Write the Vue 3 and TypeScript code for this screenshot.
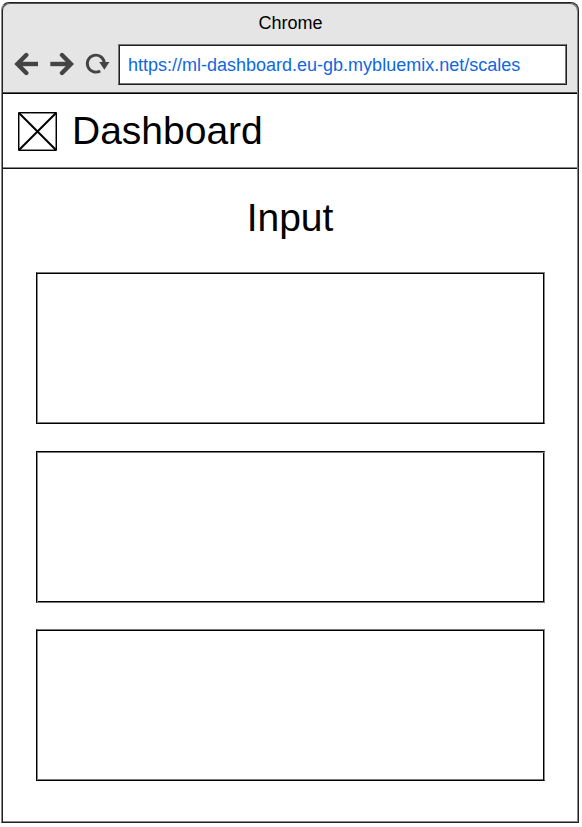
<script setup lang="ts">
const title = 'Chrome'
const url = 'https://ml-dashboard.eu-gb.mybluemix.net/scales'
const panels: string[] = ['first', 'second', 'third']
</script>

<template>
  <div class="window">
    <header class="chrome">
      <div class="title">{{ title }}</div>
      <div class="toolbar">
        <svg class="nav" width="96" height="24" viewBox="0 0 96 24" fill="none">
          <g stroke="#444" stroke-width="4.4">
            <path d="M3.5 12H24" />
            <path d="M12.3 3L3.4 12l8.9 9" stroke-linecap="round" />
            <path d="M36.3 12H57" />
            <path d="M48 3l8.9 9-8.9 9" stroke-linecap="round" />
          </g>
          <path d="M86.2 18.9A8.5 8.5 0 1 1 90.3 11" stroke="#444" stroke-width="2.9" />
          <path d="M85.2 10h10.2l-5 7.8z" fill="#444" />
        </svg>
        <div class="address">{{ url }}</div>
      </div>
    </header>
    <div class="bar">
      <svg class="logo" width="39" height="39" viewBox="0 0 39 39" fill="none">
        <path d="M1.5 1.5h36v36h-36z" stroke="#888" />
        <path d="M.5.5h38v38H.5z" stroke="#000" />
        <path d="M1 1l37 37M38 1L1 38" stroke="#000" stroke-width="2" />
      </svg>
      <h1>Dashboard</h1>
    </div>
    <main>
      <h2>Input</h2>
      <section v-for="name in panels" :key="name" class="panel" :class="name"></section>
    </main>
  </div>
</template>

<style>
body {
  background: #fff;
}
</style>

<style scoped>
.window {
  box-sizing: border-box;
  width: 578px;
  height: 821px;
  margin: 2px 0 0 1px;
  border: 1px solid #222;
  border-left-color: #888;
  border-radius: 8px 8px 0 0;
  box-shadow: inset 1px 0 #222, inset -1px 0 #888, inset 0 -1px #888, inset 0 1px #555;
  color: #000;
  font-family: 'Liberation Sans', Arial, sans-serif;
}
.chrome {
  box-sizing: border-box;
  height: 91px;
  margin: 0 1px;
  border-bottom: 1px solid #000;
  box-shadow: inset 0 -1px #555, inset 0 1px #555;
  border-radius: 7px 7px 0 0;
  background: #e5e5e5;
}
.title {
  height: 41px;
  padding-left: 1px;
  line-height: 40px;
  text-align: center;
  font-size: 18px;
}
.toolbar {
  display: flex;
}
.nav {
  flex: none;
  margin: 8px 8px 0 11px;
}
.address {
  box-sizing: border-box;
  width: 449px;
  height: 41px;
  padding-left: 9px;
  border: 1px solid #231f20;
  border-top-color: #777;
  border-left-color: #777;
  box-shadow: inset 1px 1px #231f20, inset -1px -1px #777;
  background: #fff;
  color: #1067e0;
  font-size: 18px;
  line-height: 41px;
  white-space: nowrap;
}
.bar {
  display: flex;
  box-sizing: border-box;
  height: 75px;
  margin: 0 1px;
  padding-left: 15px;
  border-bottom: 1px solid #111;
  box-shadow: inset 0 -1px #888;
}
.logo {
  flex: none;
  margin-top: 18px;
}
h1,
h2 {
  margin: 0;
  font-size: 39px;
  font-weight: 400;
}
h1 {
  margin-left: 15px;
  line-height: 73px;
}
h2 {
  height: 103px;
  text-align: center;
  line-height: 98px;
}
.panel {
  box-sizing: border-box;
  width: 509px;
  height: 152px;
  margin: 0 0 27px 34px;
  border: 1px solid #000;
  border-top-color: #777;
  border-right-color: #888;
  box-shadow: inset 0 1px #000, inset 1px 0 #888, inset -1px 0 #000, inset 0 -1px #777;
}
.second {
  margin-bottom: 26px;
  border-top-color: #000;
  border-bottom-color: #777;
  box-shadow: inset 0 1px #777, inset 1px 0 #888, inset -1px 0 #000, inset 0 -1px #000;
}
</style>
